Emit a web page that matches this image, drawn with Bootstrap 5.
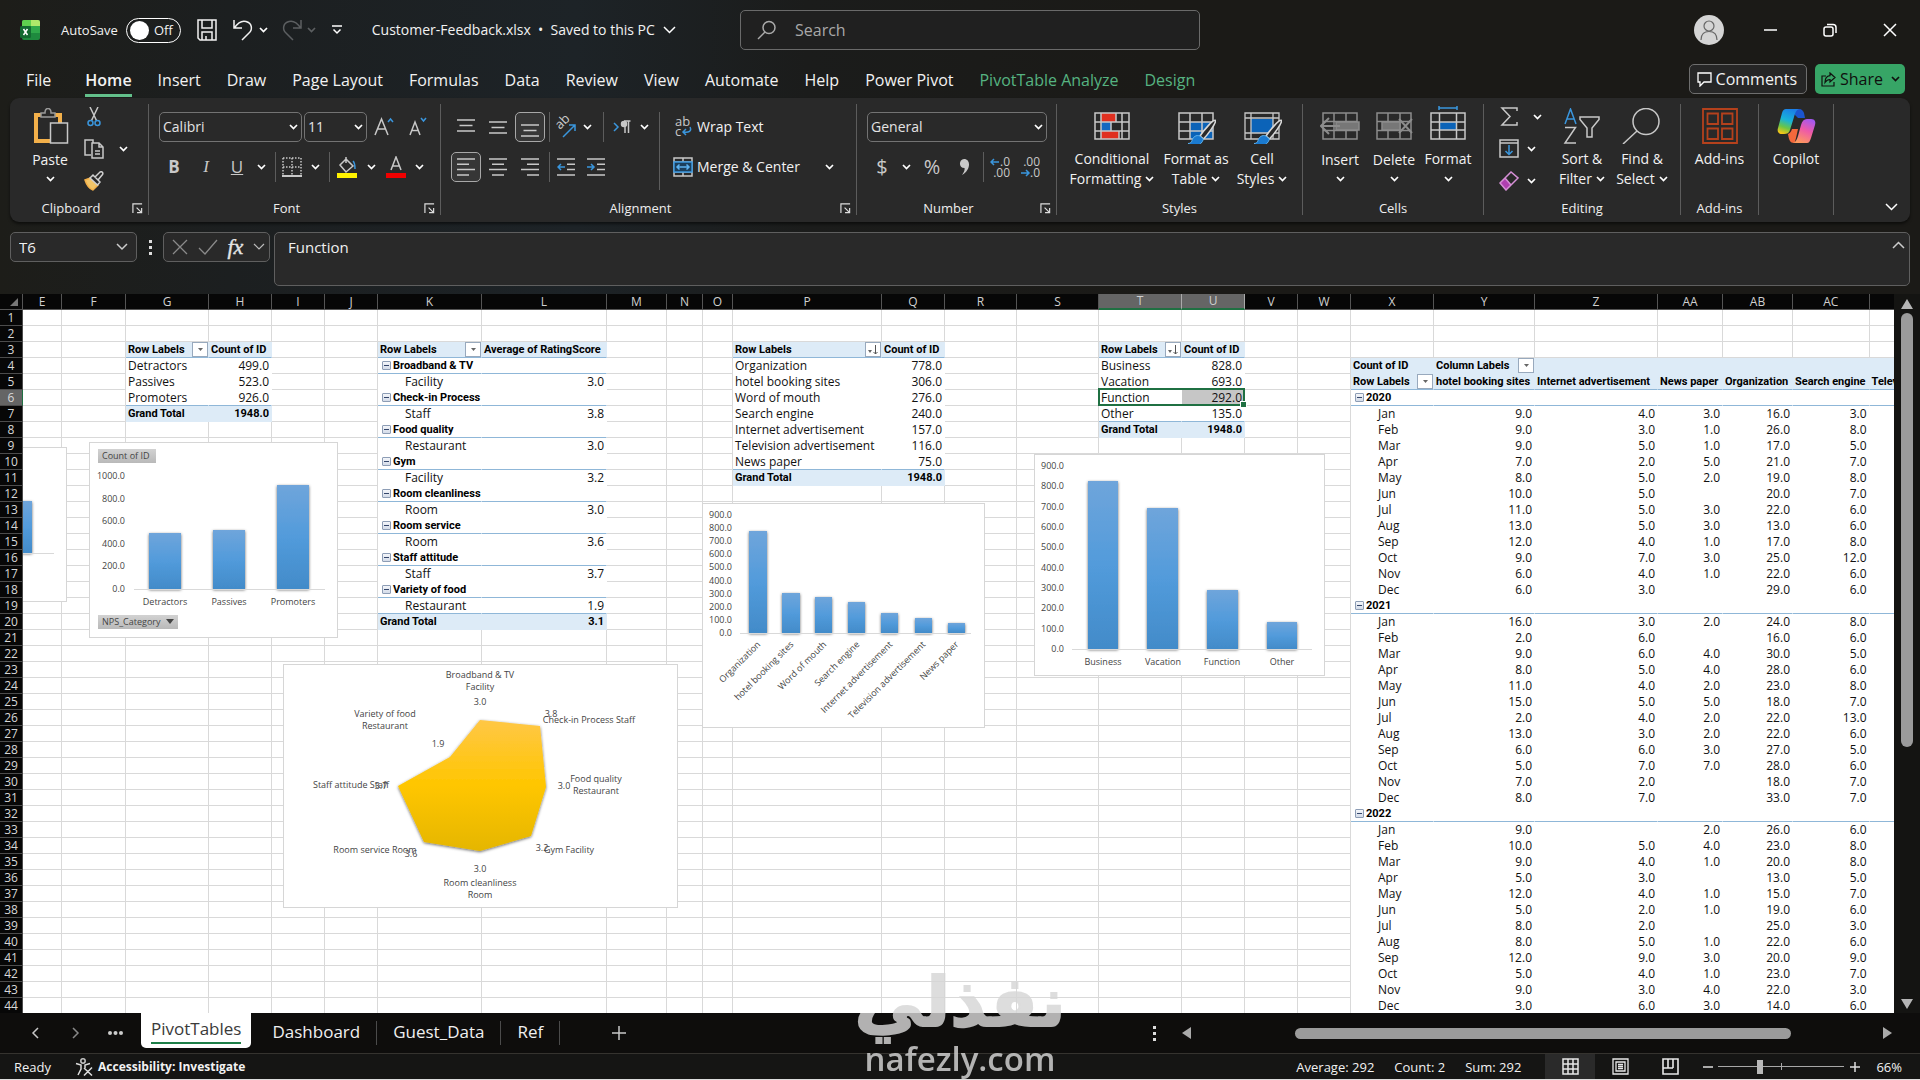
<!DOCTYPE html>
<html lang="en">
<head>
<meta charset="utf-8">
<meta name="viewport" content="width=device-width, initial-scale=1">
<title>Customer-Feedback.xlsx</title>
<link href="https://cdn.jsdelivr.net/npm/bootstrap@5.3.0/dist/css/bootstrap.min.css" rel="stylesheet">
<style>
:root{--ink:#f2f2f2;--line:#5c5c5c;--panel:#292929;--grid:#d9d9d9;--accent:#1f7042;--ui:"Open Sans","Noto Sans",sans-serif}
body{height:100vh;overflow:hidden;color:var(--ink);font:14px/20px var(--ui);background:linear-gradient(90deg,#1d1d19 0,#1c1f20 12%,#1d2327 30%,#1b1c1b 42%,#1b1a17 60%,#1b1a17 100%)}
button{background:none;border:0;padding:0;color:inherit;line-height:inherit}
svg{display:block;flex:none;fill:none;stroke:#c8c8c8;stroke-width:1.5}
.chv{width:9px;height:6px;stroke:#fff;stroke-width:1.7}
.chv.dim{stroke:#5c5f61}.chv.ink{stroke:#10100e}
.ic{display:flex;align-items:center;justify-content:center;flex:none;height:30px}
.ic svg text{font-family:"Open Sans","Noto Sans",sans-serif;fill:#c8c8c8;stroke:none}
/* title bar */
.titlebar{height:60px}
.title-left{width:740px;padding-left:20px}
.auto{font-size:13px;margin-left:21px}
.toggle{width:55px;height:25px;border:1px solid #fff;border-radius:13px;padding:0 7px 0 3px;margin:0 16px 0 8px;font-size:13px}
.toggle input{appearance:none;width:19px;height:19px;border-radius:50%;background:#fff;margin:0}
.redo{margin-left:7px}
.search{width:460px;height:40px;border:1px solid #6a6a6a;border-radius:5px;background:#202020;padding:0 16px}
.search input{background:none;border:0;outline:0;color:#b5b5b5;font-size:16px}
.search input::placeholder{color:#a8a8a8;opacity:1}
.winbtn{width:60px;height:40px}
/* ribbon tabs */
.tabs{height:38px;padding:0 15px 0 26px;font-size:16px;line-height:24px}
.tabs nav{gap:26px;padding-top:8px}
.tabs nav a{color:var(--ink);text-decoration:none;white-space:nowrap}
.tabs nav a.on{font-weight:600;border-bottom:3px solid #63c08b;height:29px;line-height:24px;padding-bottom:2px}
.tabs nav a.ctx{color:#56b381}
.cmt{border:1px solid #6e6e6e;border-radius:5px;background:#262626;height:30px;padding:0 9px 0 7px}
.share{border-radius:5px;background:#37a566;color:#10100e;height:30px;padding:0 5px 0 6px}
/* ribbon */
.ribbon{margin:0 10px;background:var(--panel);border-radius:9px;padding:6px 8px 7px 0;height:124px;box-shadow:0 2px 3px #0008}
.rg{border-right:1px solid var(--line);display:flex;flex-direction:column;flex:none}
.rg .body{height:98px;display:flex}
.rg .cap{display:flex;align-items:center;font-size:13px;line-height:14px;color:#eee}
.rg .cap span{flex:1;text-align:center}
.g-clip{width:139px}.g-font{width:292px}.g-align{width:416px}.g-num{width:200px}.g-styles{width:246px}.g-cells{width:181px}.g-edit{width:197px}.g-add{width:78px}.g-cop{width:75px}
.pl10{padding-left:10px}
.rows{display:flex;flex-direction:column;gap:10px;padding-top:8px}
.rows>div{display:flex;height:30px;align-items:center}
.minis{display:flex;flex-direction:column;gap:6px}
.minis>div{display:flex;height:26px}.minis .ic{height:26px}
.s10{width:10px}.s16{width:16px}.s18{width:18px}.s20{width:20px}.s22{width:22px}.s26{width:26px}.s28{width:28px}.s30{width:30px}.s34{width:34px}
.sep{flex:none;width:8px;height:30px;background:linear-gradient(var(--line),var(--line)) center/1px 100% no-repeat}
.tall{height:78px;margin-top:8px;margin-right:6px}
.sel{border:1px solid #a8a8a8;border-radius:5px;background:#363636}
.merge-opt{margin-left:20px}
.big{display:flex;flex-direction:column;align-items:center;padding-top:4px;flex:none;line-height:20px;white-space:nowrap}
.big>svg{margin-bottom:5px;height:36px;width:40px}
.big .low{padding-top:2px}
.big .ln{display:flex;align-items:center;justify-content:center;gap:4px;height:20px}
.w54{width:54px}.w60{width:60px}.w78{width:78px}.w90{width:90px}
.pick{appearance:none;height:30px;border:1px solid #737373;border-radius:5px;color:#e4e4e4;padding:0 3px;font-size:14px;background:#292929 url("data:image/svg+xml,%3Csvg xmlns='http://www.w3.org/2000/svg' viewBox='0 0 9 6'%3E%3Cpath d='M1 1l3.500 3.500L8 1' fill='none' stroke='%23fff' stroke-width='1.700'/%3E%3C/svg%3E") right 3px center/9px 6px no-repeat}
.p-name{width:143px;margin-right:2px}.p-size{width:63px}.p-num{width:180px}
.glyph{color:#c8c8c8;font-size:17px}
.serif{font-family:"Liberation Serif",serif}
/* formula bar */
.fbar{padding:10px 10px 8px;height:72px}
.fbox{border:1px solid #5f5f5f;border-radius:5px;background:var(--panel)}
.fbox input,.fbox textarea{background:none;border:0;outline:0;color:#f0f0f0;font-size:15px;resize:none;padding:0}
.namebox{width:127px;height:30px}.fxbox{width:107px;height:30px}.formula{padding:4px 4px 0 13px}
.fxb{font:italic 22px/24px "Liberation Serif",serif;color:#e4e4e4;-webkit-text-stroke:.4px #e4e4e4}
/* sheet */
.work{min-height:0}
.sheet{position:relative;overflow:hidden;background:#fff;flex:1;min-width:0}
.grid{table-layout:fixed;border-collapse:separate;border-spacing:0;width:max-content;color:#111;font:12px/15px "Open Sans","Noto Sans",sans-serif}
.grid th,.grid td{height:16px;padding:0 3px 0 2px;border-right:1px solid var(--grid);border-bottom:1px solid var(--grid);white-space:nowrap;overflow:hidden;background:#fff}
.grid thead th{background:#070707;color:#d0d0d0;font-weight:400;text-align:center;border-color:#555;padding:0;line-height:14px}
.grid tbody th{background:#070707;color:#d8d8d8;font-weight:400;text-align:center;border-color:#4c4c4c;padding:0}
.grid thead th.cur{background:#656565;border-right-color:#aaa;border-bottom:2px solid var(--accent)}
.grid tbody th.cur{background:#656565;border-right:1px solid var(--accent)}
.grid td.pv{border-color:#fff;overflow:visible}
.grid td.hd,.grid td.gt{background:#ddebf7;border-color:#ddebf7}
.grid .bd{font:700 11px/15px Roboto,"Open Sans",sans-serif;color:#000}
.grid td.bb{border-bottom-color:#8fb7d8}
.grid td.num{text-align:right;padding-right:2px}
.grid td.in{padding-left:27px}
.grid td.shade{background:#c6c6c6;border-color:#c6c6c6}
.fil{float:right;width:16px;height:15px;margin-right:-3px;background:#fff;border:1px solid #98a9bd;display:flex;align-items:center;justify-content:center}
.fil svg{stroke:#555;fill:#666;stroke-width:1}
.colp{float:left;width:9px;height:9px;margin:3px 2px 0 2px;border:1px solid #8d9db5;background:linear-gradient(#f4f6fa,#d3dbe8);border-radius:1px;display:flex;align-items:center;justify-content:center}
.colp i{width:5px;height:1px;background:#34466b}
.pick-range{position:absolute;left:1098px;top:94px;width:147px;height:18px;border:2px solid var(--accent)}
.pick-range i{position:absolute;right:-3px;bottom:-3px;width:5px;height:5px;background:var(--accent);outline:1px solid #fff}
.chart{position:absolute;background:#fff;border:1px solid #d6d6d6}
.chart svg{position:absolute;left:-1px;top:-1px;stroke:none}
.chart text{font:9px "Open Sans","Noto Sans",sans-serif;fill:#444}
.c-part{left:23px;top:153px;width:44px;height:155px;border-left:0}
.c-part svg{left:0}
.c-nps{left:89px;top:148px;width:249px;height:196px}
.c-rating{left:283px;top:370px;width:395px;height:244px}
.c-source{left:702px;top:209px;width:283px;height:225px}
.c-purpose{left:1034px;top:160px;width:291px;height:222px}
.vsb{width:26px;background:#141412;padding:5px 0 4px}
.vsb .bar{width:12px;background:#9b9b9b;border-radius:6px;height:434px}
/* bottom */
.sheets{height:41px;background:#0e0d0c;border-bottom:1px solid #35332f;font-size:17px;color:#f0f0f0}
.sheets a{color:inherit;text-decoration:none;border-right:1px solid #4b4b4b;padding:0 16px;height:24px;line-height:22px}
.sheets a.on{background:#fff;color:#3a3a3a;border:0;border-radius:0 0 5px 5px;height:35px;padding:4px 10px 0;align-self:flex-start;margin-right:5px}
.sheets a.on span{display:block;border-bottom:2px solid #1e7f48;height:27px;line-height:24px}
.sh-nav{width:141px;padding-left:31px}.sh-next{margin-left:33px}.sh-more{margin-left:28px}
.hscroll{padding-right:28px}.grip{margin-right:26px}
.hbar{width:496px;height:11px;background:#9b9b9b;border-radius:6px;margin:0 92px 0 104px}
.status{height:26px;background:#151514;font-size:13px;border-bottom:1px solid #ddd;padding:0 18px 0 14px}
.acc{margin-left:24px;font-weight:700;font-size:12px}
.stats{gap:20px;margin-right:24px}
.view{width:50px;height:25px;display:flex;align-items:center;justify-content:center}
.view.on{background:#2a2a2a}
.zoomr{appearance:none;width:126px;height:14px;margin:0 6px 0 5px;background:linear-gradient(#a8a8a8,#a8a8a8) center/1px 7px no-repeat,linear-gradient(#a8a8a8,#a8a8a8) center/100% 1px no-repeat}
.zoomr::-webkit-slider-thumb{appearance:none;width:6px;height:14px;background:#b8b8b8}
.watermark{position:absolute;left:854px;top:962px;width:212px;color:#d6d6d6;opacity:.82;pointer-events:none;text-align:center;white-space:nowrap}
.watermark .ar{font:700 69px/80px "DejaVu Sans",sans-serif;height:77px;-webkit-text-stroke:2px #d6d6d6}
.watermark .en{font:600 33px/40px "Open Sans",sans-serif}
</style>
</head>
<body class="d-flex flex-column">
<svg width="0" height="0" class="position-absolute">
<symbol id="c" viewBox="0 0 9 6"><path d="M1 1l3.500 3.500L8 1"/></symbol>
<symbol id="launch" viewBox="0 0 12 12"><path d="M1 11V1h10M5 5l5 5M10.500 5.500v5h-5" stroke="#ddd" stroke-width="1.300"/></symbol>
<symbol id="tbl" viewBox="0 0 36 28"><path d="M1 1h34v26H1zM1 9.500h34M1 18.500h34M12 1v26M24 1v26"/></symbol>
<symbol id="brush" viewBox="0 0 30 28"><path d="M28.500 1.500c-2-1.500-12 10-15.500 15.500l3.500 3C20 16.500 29.500 4 28.500 1.500z" fill="#292929" stroke="#d8d8d8" stroke-width="1.600"/><path d="M13 17c-4-1.500-7 1-8 4.500-.5 2-2 3-4 3 5 3.500 13 3.500 15.500-4.500z" fill="#1a7ad0" stroke="#5fb0ea" stroke-width="1"/></symbol>
</svg>

<header class="titlebar d-flex align-items-center flex-shrink-0">
  <div class="title-left d-flex align-items-center">
    <svg width="20" height="22" viewBox="0 0 20 22"><g stroke="none"><rect x="2" y="1" width="18" height="20" rx="2" fill="#1e8a3e"/><path d="M2 3a2 2 0 0 1 2-2h7v6H2z" fill="#5fd04f"/><path d="M11 1h7a2 2 0 0 1 2 2v4h-9z" fill="#aee86a"/><path d="M11 7h9v7h-9z" fill="#2fa84a"/><rect y="7" width="11" height="12" rx="1.500" fill="#136a31"/></g><path d="M3.500 10l4 6M7.500 10l-4 6" stroke="#fff"/></svg>
    <label for="autosave" class="auto">AutoSave</label>
    <span class="toggle d-flex align-items-center justify-content-between"><input type="checkbox" id="autosave"><span>Off</span></span>
    <button aria-label="Save"><svg width="20" height="22" viewBox="0 0 20 22"><path d="M1 1h18v20H3l-2-2zM5 1v8h10V1M5 21v-8h10v8M9 17v4" stroke="#f2f2f2"/></svg></button>
    <button aria-label="Undo" class="ms-3"><svg width="20" height="22" viewBox="0 0 20 22"><path d="M1 1v8h8M1.500 9C5 3.500 9 1.500 13 2.500c6 1.500 7 8 3 11.500L9 21" stroke="#f2f2f2"/></svg></button>
    <button aria-label="Undo list" class="s22 ic"><svg class="chv"><use href="#c"/></svg></button>
    <button aria-label="Redo" class="redo"><svg width="20" height="22" viewBox="0 0 20 22"><path d="M19 1v8h-8M18.500 9C15 3.500 11 1.500 7 2.500 1 4 0 10.500 4 14l7 7" stroke="#5c5f61"/></svg></button>
    <button aria-label="Redo list" class="s20 ic"><svg class="chv dim"><use href="#c"/></svg></button>
    <button aria-label="Customize toolbar" class="s30 ic"><svg width="10" height="10" viewBox="0 0 10 10"><path d="M0 1h10M1.500 4.500L5 8l3.500-3.500" stroke="#fff"/></svg></button>
    <button class="ms-3 ps-1 d-flex align-items-center gap-2 text-nowrap">Customer-Feedback.xlsx &nbsp;•&nbsp; Saved to this PC <svg width="13" height="8" viewBox="0 0 13 8"><path d="M1 1l5.500 5.500L12 1" stroke="#fff"/></svg></button>
  </div>
  <div class="search d-flex align-items-center gap-3">
    <svg width="20" height="20" viewBox="0 0 20 20"><circle cx="12" cy="7.500" r="6" stroke="#aaa"/><path d="M8 12l-7 7" stroke="#aaa"/></svg>
    <input type="search" placeholder="Search" aria-label="Search" class="flex-fill">
  </div>
  <div class="ms-auto d-flex align-items-center">
    <button aria-label="Account" class="me-3"><svg width="30" height="30" viewBox="0 0 30 30"><circle cx="15" cy="15" r="15" fill="#d4d4d4" stroke="none"/><circle cx="15" cy="11" r="5" stroke="#666" stroke-width="1.200"/><path d="M7 25c0-6 3.500-8.500 8-8.500s8 2.500 8 8.500" stroke="#666" stroke-width="1.200"/></svg></button>
    <button aria-label="Minimize" class="winbtn ic"><svg width="13" height="2"><path d="M0 1h13" stroke="#fff"/></svg></button>
    <button aria-label="Restore" class="winbtn ic"><svg width="14" height="14" viewBox="0 0 14 14"><rect x="1" y="4" width="9" height="9" rx="2" stroke="#fff"/><path d="M4 1.500h6a3 3 0 0 1 3 3V10" stroke="#fff"/></svg></button>
    <button aria-label="Close" class="winbtn ic"><svg width="14" height="14" viewBox="0 0 14 14"><path d="M1 1l12 12M13 1L1 13" stroke="#fff"/></svg></button>
  </div>
</header>

<div class="tabs d-flex flex-shrink-0">
  <nav class="d-flex">
    <a href="#">File</a><a href="#" class="on ms-2">Home</a><a href="#">Insert</a><a href="#">Draw</a><a href="#">Page Layout</a><a href="#">Formulas</a><a href="#">Data</a><a href="#">Review</a><a href="#">View</a><a href="#">Automate</a><a href="#">Help</a><a href="#">Power Pivot</a><a href="#" class="ctx">PivotTable Analyze</a><a href="#" class="ctx">Design</a>
  </nav>
  <div class="ms-auto d-flex pt-1 gap-2">
    <button class="cmt d-flex align-items-center gap-1"><svg width="15" height="15" viewBox="0 0 15 15"><path d="M1 1h13v9H7l-4 4v-4H1z" stroke="#fff" stroke-width="1.300"/></svg>Comments</button>
    <button class="share d-flex align-items-center gap-1"><svg width="15" height="15" viewBox="0 0 15 15"><path d="M5 4H1v10h12v-4M9 1l5 4.500L9 10V7.500C6 7.500 5 9 4 10.500 4 6.500 6 4 9 3.700z" stroke="#10100e" stroke-width="1.200"/></svg>Share<svg class="chv ink ms-1"><use href="#c"/></svg></button>
  </div>
</div>

<section class="ribbon d-flex flex-shrink-0">
  <div class="rg g-clip">
    <div class="body pl10">
      <button class="big w60"><svg viewBox="0 0 40 36"><path d="M4 5h28v30H4z" fill="#f3b04a" stroke="none"/><path d="M8 9h20v22H8z" fill="#292929" stroke="none"/><path d="M11 9V5h4c0-6 6-6 6 0h4v4z" fill="#292929" stroke="#9a9a9a"/><rect x="20.500" y="15" width="17" height="20" fill="#292929" stroke="#c8c8c8"/></svg><span class="ln low">Paste</span><span class="ln"><svg class="chv"><use href="#c"/></svg></span></button>
      <div class="minis">
        <div><button aria-label="Cut" class="ic s28"><svg width="14" height="20" viewBox="0 0 14 20"><path d="M3 0l6.500 13.500M11 0L4.500 13.500"/><circle cx="3.500" cy="16" r="2.500" stroke="#3a96dd"/><circle cx="10.500" cy="16" r="2.500" stroke="#3a96dd"/></svg></button></div>
        <div><button aria-label="Copy" class="ic s28"><svg width="20" height="20" viewBox="0 0 20 20"><path d="M7 16H1V1h8v3M8 4h7l4 4v11H8zM15 4v4h4M11 12h5M11 15h5"/></svg></button><button aria-label="Copy options" class="ic s30"><svg class="chv"><use href="#c"/></svg></button></div>
        <div><button aria-label="Format Painter" class="ic s28"><svg width="20" height="20" viewBox="0 0 20 20"><path d="M1 9l5-2 8 7-5 5c-3-1-6-4-8-10z" fill="#f3c567" stroke="#f3b04a"/><path d="M6 7l3-3 7 7-2.500 3zM11 6l5-5c2-1 3.500 1 2.500 2.500L14 9" fill="#292929" stroke="#d0d0d0"/></svg></button></div>
      </div>
    </div>
    <div class="cap"><span>Clipboard</span><button aria-label="Clipboard settings" class="s16"><svg width="11" height="11"><use href="#launch"/></svg></button></div>
  </div>

  <div class="rg g-font">
    <div class="body"><div class="rows pl10">
      <div><select class="pick p-name" aria-label="Font"><option>Calibri</option></select><select class="pick p-size" aria-label="Font size"><option>11</option></select>
        <button aria-label="Increase font" class="ic s34"><svg width="20" height="20" viewBox="0 0 20 20"><path d="M1 18L7.500 2 14 18M3.500 12h8"/><path d="M14 5l2.500-3L19 5" stroke="#3a96dd"/></svg></button>
        <button aria-label="Decrease font" class="ic s34"><svg width="20" height="20" viewBox="0 0 20 20"><path d="M2 18L7 5l5 13M4 13.500h6.500"/><path d="M13 1l2.500 3L18 1" stroke="#3a96dd"/></svg></button></div>
      <div><button class="ic s30 glyph fw-bold">B</button><button class="ic s34 glyph fst-italic serif">I</button><button class="ic s28 glyph text-decoration-underline">U</button><button aria-label="Underline options" class="ic s20"><svg class="chv"><use href="#c"/></svg></button><i class="sep"></i>
        <button aria-label="Borders" class="ic s26"><svg width="20" height="20" viewBox="0 0 20 20"><path d="M1 1h18M1 10h18M1 1v18M10 1v18M19 1v18" stroke-dasharray="1.500 1.500"/><path d="M0 19h20" stroke-width="2"/></svg></button><button aria-label="Border options" class="ic s20"><svg class="chv"><use href="#c"/></svg></button><i class="sep"></i>
        <button aria-label="Fill colour" class="ic s28"><svg width="20" height="22" viewBox="0 0 20 22"><path d="M9 1v6M3 9l6-6 7 7-7 6z"/><path d="M16 5c2 2 2 5 2 8" stroke="#3a96dd"/><path d="M0 17h20v5H0z" fill="#fff200" stroke="none"/></svg></button><button aria-label="Fill options" class="ic s20"><svg class="chv"><use href="#c"/></svg></button>
        <button aria-label="Font colour" class="ic s30"><svg width="20" height="22" viewBox="0 0 20 22"><path d="M5 14L10 1l5 13M6.500 10h7"/><path d="M0 17h20v5H0z" fill="#f00000" stroke="none"/></svg></button><button aria-label="Font colour options" class="ic s16"><svg class="chv"><use href="#c"/></svg></button></div>
    </div></div>
    <div class="cap"><span>Font</span><button aria-label="Font settings" class="s16"><svg width="11" height="11"><use href="#launch"/></svg></button></div>
  </div>

  <div class="rg g-align">
    <div class="body"><div class="rows pl10">
      <div><button aria-label="Top" class="ic s30"><svg width="18" height="22" viewBox="0 0 18 22"><path d="M0 4h18M2.500 9.500h13M0 15h18"/></svg></button><button aria-label="Middle" class="ic s34"><svg width="18" height="22" viewBox="0 0 18 22"><path d="M0 6h18M2.500 11.500h13M0 17h18"/></svg></button><button aria-label="Bottom" class="ic s30 sel"><svg width="18" height="22" viewBox="0 0 18 22"><path d="M0 9h18M2.500 14.500h13M0 20h18"/></svg></button><i class="sep"></i>
        <button aria-label="Orientation" class="ic s26"><svg width="22" height="22" viewBox="0 0 22 22"><text x="0" y="0" font-size="13" transform="translate(5 14) rotate(-45)">ab</text><path d="M8 21L20 9M14 9h6v6" stroke="#3a96dd"/></svg></button><button aria-label="Orientation options" class="ic s16"><svg class="chv"><use href="#c"/></svg></button><i class="sep mx-1"></i><button aria-label="Direction" class="ic s22"><svg width="18" height="14" viewBox="0 0 18 14"><path d="M1 3l4 4-4 4" stroke="#3a96dd"/><path d="M12 13V1M15.500 13V1M17.500 1H11"/><circle cx="11" cy="4" r="2.500" fill="#c8c8c8"/></svg></button><button aria-label="Direction options" class="ic s22"><svg class="chv"><use href="#c"/></svg></button></div>
      <div><button aria-label="Left" class="ic s30 sel"><svg width="18" height="20" viewBox="0 0 18 20"><path d="M0 2h18M0 7.300h12M0 12.600h18M0 18h12"/></svg></button><button aria-label="Centre" class="ic s34"><svg width="18" height="20" viewBox="0 0 18 20"><path d="M0 2h18M3 7.300h12M0 12.600h18M3 18h12"/></svg></button><button aria-label="Right" class="ic s30"><svg width="18" height="20" viewBox="0 0 18 20"><path d="M0 2h18M6 7.300h12M0 12.600h18M6 18h12"/></svg></button><i class="sep"></i>
        <button aria-label="Decrease indent" class="ic s26"><svg width="18" height="20" viewBox="0 0 18 20"><path d="M0 2h18M10 7.300h8M10 12.600h8M0 18h18"/><path d="M8 10H1M4 7l-3 3 3 3" stroke="#3a96dd"/></svg></button><button aria-label="Increase indent" class="ic s34"><svg width="18" height="20" viewBox="0 0 18 20"><path d="M0 2h18M10 7.300h8M10 12.600h8M0 18h18"/><path d="M0 10h7M4 7l3 3-3 3" stroke="#3a96dd"/></svg></button></div>
    </div>
    <i class="sep tall"></i>
    <div class="rows">
      <div><button class="ic"><span class="ic s28"><svg width="18" height="22" viewBox="0 0 18 22"><text x="1" y="10" font-size="13">ab</text><text x="1" y="20" font-size="13">c</text><path d="M16 11c2 4-1 6-7 5M12 13l-3 3 3 3" stroke="#3a96dd"/></svg></span>Wrap Text</button></div>
      <div><button class="ic"><span class="ic s28"><svg width="20" height="20" viewBox="0 0 20 20"><path d="M1 1h18v18H1zM1 5h18M1 15h18M10 1v4M10 15v4"/><path d="M1 5h18v10H1z" fill="#1c3f5c" stroke="#3a96dd"/><path d="M4 10h12M6.500 7.500L4 10l2.500 2.500M13.500 7.500L16 10l-2.500 2.500" stroke="#5db2f0"/></svg></span>Merge &amp; Center</button><button aria-label="Merge options" class="ic s20 merge-opt"><svg class="chv"><use href="#c"/></svg></button></div>
    </div></div>
    <div class="cap"><span>Alignment</span><button aria-label="Alignment settings" class="s16"><svg width="11" height="11"><use href="#launch"/></svg></button></div>
  </div>

  <div class="rg g-num">
    <div class="body"><div class="rows pl10">
      <div><select class="pick p-num" aria-label="Number format"><option>General</option></select></div>
      <div><button class="ic s30 glyph fs-5">$</button><button aria-label="Currency options" class="ic s18"><svg class="chv"><use href="#c"/></svg></button><button class="ic s34 glyph fs-5">%</button><button aria-label="Comma style" class="ic s30"><svg width="11" height="18" viewBox="0 0 11 18"><path d="M5 1c7 0 7 11-2 16 2-3 3-5 2.500-7C-1 10 0 1 5 1z" fill="#c8c8c8" stroke="none"/></svg></button><i class="sep"></i>
      <button aria-label="Increase decimal" class="ic s26"><svg width="20" height="22" viewBox="0 0 20 22"><path d="M9 6H1M4 3L1 6l3 3" stroke="#3a96dd"/><text x="20" y="10" font-size="12" text-anchor="end">.0</text><text x="20" y="21" font-size="12" text-anchor="end">.00</text></svg></button>
      <button aria-label="Decrease decimal" class="ic s34"><svg width="20" height="22" viewBox="0 0 20 22"><path d="M1 17h8M6 14l3 3-3 3" stroke="#3a96dd"/><text x="20" y="10" font-size="12" text-anchor="end">.00</text><text x="20" y="21" font-size="12" text-anchor="end">.0</text></svg></button></div>
    </div></div>
    <div class="cap"><span>Number</span><button aria-label="Number settings" class="s16"><svg width="11" height="11"><use href="#launch"/></svg></button></div>
  </div>

  <div class="rg g-styles">
    <div class="body pl10">
      <button class="big w90"><svg viewBox="-2 -4 40 36"><path d="M7 1h15v9H7zM7 19h18v8H7z" fill="#e03020" stroke="none"/><path d="M7 10h10v9H7z" fill="#1668c0" stroke="none"/><path d="M1 1h34v26H1zM1 10h34M1 19h34M7 1v26M28 1v26M22 1v9M17 10v9M25 19v8"/></svg><span class="ln">Conditional</span><span class="ln">Formatting <svg class="chv"><use href="#c"/></svg></span></button>
      <button class="big w78"><svg viewBox="-2 -4 40 36"><path d="M12 10h23v17H12z" fill="#0b63b8" stroke="none"/><path d="M1 1h34v26H1zM1 10h34M1 19h34M12 1v26M24 1v26"/><use href="#brush" x="9" y="7" width="30" height="28"/></svg><span class="ln">Format as</span><span class="ln">Table <svg class="chv"><use href="#c"/></svg></span></button>
      <button class="big w54"><svg viewBox="-2 -4 40 36"><path d="M7 7h22v14H7z" fill="#0b63b8" stroke="none"/><path d="M1 1h34v26H1zM1 6h34M1 21h34M7 1v26M29 1v26" stroke-width="1.300"/><use href="#brush" x="9" y="7" width="30" height="28"/></svg><span class="ln">Cell</span><span class="ln">Styles <svg class="chv"><use href="#c"/></svg></span></button>
    </div>
    <div class="cap"><span>Styles</span></div>
  </div>

  <div class="rg g-cells">
    <div class="body pl10">
      <button class="big w54"><svg viewBox="-2 -4 40 36"><g stroke="#8c8c8c"><use href="#tbl" width="36" height="28"/><path d="M14 10h23v8H14z" fill="#777"/><path d="M18 14H0M7 6l-8 8 8 8" stroke-width="2"/></g></svg><span class="ln low">Insert</span><span class="ln"><svg class="chv"><use href="#c"/></svg></span></button>
      <button class="big w54"><svg viewBox="-2 -4 40 36"><g stroke="#8c8c8c"><use href="#tbl" width="36" height="28"/><path d="M6 10h18v8H6z" fill="#777"/><path d="M23 7l13 14M36 7L23 21" stroke-width="2"/></g></svg><span class="ln low">Delete</span><span class="ln"><svg class="chv"><use href="#c"/></svg></span></button>
      <button class="big w54"><svg viewBox="-2 -4 40 36" overflow="visible"><path d="M9.500 10h17v8h-17z" fill="#0b63b8" stroke="none"/><path d="M1 1h34v26H1zM1 10h34M1 18h34M9.500 1v26M26.500 1v26"/><path d="M9-4h18M9-6v4M27-6v4" stroke="#3a96dd"/></svg><span class="ln">Format</span><span class="ln"><svg class="chv"><use href="#c"/></svg></span></button>
    </div>
    <div class="cap"><span>Cells</span></div>
  </div>

  <div class="rg g-edit">
    <div class="body ps-2">
      <div class="minis w60">
        <div><button aria-label="AutoSum" class="ic s34"><svg width="18" height="20" viewBox="0 0 18 20"><path d="M17 4V1H2l8 8.500L2 18h15v-3"/></svg></button><button aria-label="Sum options" class="ic s22"><svg class="chv"><use href="#c"/></svg></button></div>
        <div><button aria-label="Fill" class="ic s34"><svg width="20" height="20" viewBox="0 0 20 20"><path d="M1 1h18v17H1zM1 4h18"/><path d="M10 6v9M6.500 12l3.500 3.500 3.500-3.500" stroke="#3a96dd"/></svg></button><button aria-label="Fill options" class="ic s10"><svg class="chv"><use href="#c"/></svg></button></div>
        <div><button aria-label="Clear" class="ic s34"><svg width="20" height="20" viewBox="0 0 20 20"><path d="M1 12l5-5 6 7-5 5z" fill="#b03fb0" stroke="none"/><path d="M1 12L12 1l7 6L7 19zM6 7l6 7" stroke="#d68fd6"/></svg></button><button aria-label="Clear options" class="ic s10"><svg class="chv"><use href="#c"/></svg></button></div>
      </div>
      <button class="big w60"><svg viewBox="0 0 40 36"><path d="M3 16L8.500 1 14 16M5 11h7.500" stroke="#3a96dd"/><path d="M3 19.500h10.500L3 35h11M18 9h19v2.500l-7 8.500v9h-5v-9l-7-8.500z"/></svg><span class="ln">Sort &amp;</span><span class="ln">Filter <svg class="chv"><use href="#c"/></svg></span></button>
      <button class="big w60"><svg viewBox="0 0 40 36"><circle cx="24" cy="13.500" r="13"/><path d="M15 23L1 36"/></svg><span class="ln">Find &amp;</span><span class="ln">Select <svg class="chv"><use href="#c"/></svg></span></button>
    </div>
    <div class="cap"><span>Editing</span></div>
  </div>

  <div class="rg g-add">
    <div class="body justify-content-center"><button class="big"><svg viewBox="0 0 40 36"><path d="M3 1h34v34H3zM7.500 5.500h10.500v10.500H7.500zM22 5.500h10.500v10.500H22zM7.500 20.500h10.500V31H7.500zM22 20.500h10.500V31H22z" stroke="#b5411c" stroke-width="1.800"/></svg><span class="ln">Add-ins</span></button></div>
    <div class="cap"><span>Add-ins</span></div>
  </div>
  <div class="rg g-cop">
    <div class="body justify-content-center"><button class="big"><svg viewBox="0 0 40 36">
      <defs><linearGradient id="g1" x1=".6" y1="0" x2=".3" y2="1"><stop offset="0" stop-color="#1b7fe8"/><stop offset=".45" stop-color="#18b3d8"/><stop offset=".75" stop-color="#6cc644"/><stop offset="1" stop-color="#f5c518"/></linearGradient><linearGradient id="g2" x1=".7" y1="0" x2=".3" y2="1"><stop offset="0" stop-color="#a458f0"/><stop offset=".45" stop-color="#ee5aa8"/><stop offset="1" stop-color="#ff9a5c"/></linearGradient></defs>
      <g stroke="none"><path d="M20 1h3c3 0 4 2 5 4l1 5h-7l-4-4c0-3 0-4 2-5z" fill="#1b55d0"/><path d="M10 1h13c-3 1-4 4-5 8l-4 13c-1 3-3 4-6 4H6c-4 0-5-3-4-6L6 5c1-3 2-4 4-4z" fill="url(#g1)"/><path d="M18 35c-4 0-5-3-6-9 2-1 3-2 4-5h6l-2 9c-1 3-1 5-2 5z" fill="#f4683c"/><path d="M31 35H17c3-1 4-4 5-7l3-11c1-4 3-6 6-6h4c4 0 5 3 4 6l-4 13c-1 3-2 5-4 5z" fill="url(#g2)"/></g></svg><span class="ln">Copilot</span></button></div>
  </div>
  <div class="ms-auto align-self-end"><button aria-label="Collapse ribbon" class="d-block p-1"><svg width="13" height="8" viewBox="0 0 13 8"><path d="M1 1l5.500 5.500L12 1" stroke="#fff"/></svg></button></div>
</section>

<div class="fbar d-flex flex-shrink-0">
  <div class="fbox namebox d-flex align-items-center px-2"><input aria-label="Name box" value="T6" class="flex-fill w-50"><svg width="12" height="8" viewBox="0 0 12 8"><path d="M1 1l5 5 5-5" stroke="#ccc"/></svg></div>
  <div class="ic s26"><svg width="3" height="16"><path d="M1.500 1v15" stroke="#ddd" stroke-width="3" stroke-dasharray="3 3"/></svg></div>
  <div class="fbox fxbox d-flex align-items-center justify-content-between ps-2 pe-1">
    <button aria-label="Cancel"><svg width="16" height="16" viewBox="0 0 16 16"><path d="M1 1l14 14M15 1L1 15" stroke="#8a8a8a" stroke-width="1.300"/></svg></button>
    <button aria-label="Enter"><svg width="20" height="16" viewBox="0 0 20 16"><path d="M1 9l6 6L19 1" stroke="#8a8a8a" stroke-width="1.300"/></svg></button>
    <button class="fxb">fx</button><svg width="12" height="8" viewBox="0 0 12 8"><path d="M1 1l5 5 5-5" stroke="#bbb" stroke-width="1.200"/></svg>
  </div>
  <div class="fbox formula d-flex flex-fill ms-1"><textarea aria-label="Formula bar" class="flex-fill h-100">Function</textarea><button aria-label="Collapse formula bar" class="align-self-start pt-1"><svg width="13" height="8" viewBox="0 0 13 8"><path d="M1 7l5.500-5.500L12 7" stroke="#ccc"/></svg></button></div>
</div>

<main class="work d-flex flex-fill overflow-hidden">
  <div class="sheet">
    <table class="grid"><colgroup id="cols"></colgroup><thead><tr id="head"></tr></thead><tbody id="rows"></tbody></table>
    <div class="pick-range"><i></i></div>
    <div class="chart c-part"></div><div class="chart c-nps"></div><div class="chart c-rating"></div><div class="chart c-source"></div><div class="chart c-purpose"></div>
  </div>
  <div class="vsb d-flex flex-column align-items-center">
    <svg width="12" height="10"><path d="M6 0l6 10H0z" fill="#b5b5b5" stroke="none"/></svg><div class="bar mt-1"></div>
    <svg width="12" height="10" class="mt-auto"><path d="M6 10l6-10H0z" fill="#b5b5b5" stroke="none"/></svg>
  </div>
</main>

<div class="sheets d-flex align-items-center flex-shrink-0">
  <div class="sh-nav d-flex align-items-center"><button aria-label="Previous sheet"><svg width="8" height="12" viewBox="0 0 8 12"><path d="M7 1L2 6l5 5"/></svg></button><button aria-label="Next sheet" class="sh-next"><svg width="8" height="12" viewBox="0 0 8 12"><path d="M1 1l5 5-5 5" stroke="#888"/></svg></button><button aria-label="More sheets" class="sh-more"><svg width="15" height="4"><g fill="#ccc" stroke="none"><circle cx="2" cy="2" r="2"/><circle cx="7.500" cy="2" r="2"/><circle cx="13" cy="2" r="2"/></g></svg></button></div>
  <a href="#" class="on"><span>PivotTables</span></a><a href="#">Dashboard</a><a href="#">Guest_Data</a><a href="#">Ref</a>
  <button aria-label="New sheet" class="ms-5 ps-1"><svg width="14" height="14" viewBox="0 0 14 14"><path d="M7 0v14M0 7h14"/></svg></button>
  <div class="hscroll ms-auto d-flex align-items-center"><svg class="grip" width="3" height="15"><path d="M1.500 0v15" stroke="#ddd" stroke-width="3" stroke-dasharray="3 3"/></svg><svg width="9" height="12"><path d="M9 0v12L0 6z" fill="#aaa" stroke="none"/></svg><div class="hbar"></div><svg width="9" height="12"><path d="M0 0v12l9-6z" fill="#aaa" stroke="none"/></svg></div>
</div>

<footer class="status d-flex align-items-center flex-shrink-0">
  <span>Ready</span>
  <button class="d-flex align-items-center gap-1 acc"><svg width="19" height="18" viewBox="0 0 19 18"><circle cx="8" cy="3" r="2.200"/><path d="M1 5.500l5 1.500v4l-3 6M15 5.500L10 7v3M9 10l8 7.500M17 9.500l-8 8" stroke="#ddd"/></svg>Accessibility: Investigate</button>
  <div class="stats d-flex ms-auto"><span>Average: 292</span><span>Count: 2</span><span>Sum: 292</span></div>
  <button class="view on" aria-label="Normal"><svg width="17" height="17" viewBox="0 0 17 17"><path d="M1 1h15v15H1zM6 1v15M11 1v15M1 6h15M1 11h15" stroke="#e8e8e8"/></svg></button>
  <button class="view" aria-label="Page layout"><svg width="17" height="17" viewBox="0 0 17 17"><path d="M1 1h15v15H1zM4 4h9v9H4zM6 6.500h5M6 8.500h5M6 10.500h5" stroke="#e8e8e8" stroke-width="1.300"/></svg></button>
  <button class="view" aria-label="Page break"><svg width="17" height="17" viewBox="0 0 17 17"><path d="M1 1h15v15H1zM6 1v9M11 1v9M1 10h10" stroke="#e8e8e8" stroke-width="1.600"/></svg></button>
  <button aria-label="Zoom out" class="ms-2"><svg width="10" height="2"><path d="M0 1h10" stroke="#ddd"/></svg></button>
  <input type="range" class="zoomr" min="0" max="100" value="32" aria-label="Zoom">
  <button aria-label="Zoom in" class="me-3"><svg width="10" height="10"><path d="M5 0v10M0 5h10" stroke="#ddd"/></svg></button>
  <span>66%</span>
</footer>
<div class="watermark"><div class="ar" lang="ar" dir="rtl">نفذلي</div><div class="en">nafezly.com</div></div>

<script>
const columns = [['E',39],['F',64],['G',83],['H',63],['I',53],['J',53],['K',104],['L',125],['M',60],['N',36],['O',30],['P',149],['Q',63],['R',72],['S',82],['T',83],['U',63],['V',53],['W',53],['X',83],['Y',101],['Z',123],['AA',65],['AB',70],['AC',76],['AD',120]];
const names = columns.map(c => c[0]);
const cells = {};
const put = (col, row, text, cls) => cells[col + row] = {text, cls};
const drop = '<button class="fil" aria-label="Filter"><svg width="5" height="3"><path d="M0 0h5L2.500 3z" stroke="none"/></svg></button>';
const sorted = '<button class="fil" aria-label="Sorted filter"><svg width="12" height="10" viewBox="0 0 12 10"><path d="M1 5h4L3 8z" stroke="none"/><path d="M8.500 0v9M6.500 7l2 2 2-2" fill="none"/></svg></button>';
const fold = '<span class="colp"><i></i></span>';
const simple = (a, b, data, total, btn) => {
  put(a, 3, btn + 'Row Labels', 'hd bd bb'); put(b, 3, 'Count of ID', 'hd bd bb');
  data.forEach(([n, v], i) => { const bb = i == data.length - 1 ? ' bb' : ''; put(a, 4 + i, n, bb); put(b, 4 + i, v, 'num' + bb); });
  const r = 4 + data.length; put(a, r, 'Grand Total', 'gt bd'); put(b, r, total, 'gt bd num');
};
simple('G', 'H', [['Detractors','499.0'],['Passives','523.0'],['Promoters','926.0']], '1948.0', drop);
simple('P', 'Q', [['Organization','778.0'],['hotel booking sites','306.0'],['Word of mouth','276.0'],['Search engine','240.0'],['Internet advertisement','157.0'],['Television advertisement','116.0'],['News paper','75.0']], '1948.0', sorted);
simple('T', 'U', [['Business','828.0'],['Vacation','693.0'],['Function','292.0'],['Other','135.0']], '1948.0', sorted);
cells.U6.cls += ' shade';
put('K', 3, drop + 'Row Labels', 'hd bd bb'); put('L', 3, 'Average of RatingScore', 'hd bd bb');
[['Broadband &amp; TV','Facility','3.0'],['Check-in Process','Staff','3.8'],['Food quality','Restaurant','3.0'],['Gym','Facility','3.2'],['Room cleanliness','Room','3.0'],['Room service','Room','3.6'],['Staff attitude','Staff','3.7'],['Variety of food','Restaurant','1.9']].forEach(([g, n, v], i) => {
  const r = 4 + i * 2, e = i == 7 ? ' bb' : '';
  put('K', r, fold + g, 'bd bb'); put('L', r, '', 'bb'); put('K', r + 1, n, 'in' + e); put('L', r + 1, v, 'num' + e);
});
put('K', 20, 'Grand Total', 'gt bd'); put('L', 20, '3.1', 'gt bd num');
const wide = ['X','Y','Z','AA','AB','AC','AD'];
['Count of ID', drop + 'Column Labels','','','','',''].forEach((t, i) => put(wide[i], 4, t, 'hd bd'));
[drop + 'Row Labels','hotel booking sites','Internet advertisement','News paper','Organization','Search engine','Television advertisement'].forEach((t, i) => put(wide[i], 5, t, 'hd bd bb'));
const months = 'Jan Feb Mar Apr May Jun Jul Aug Sep Oct Nov Dec'.split(' ');
const years = {
 2020: ['9,4,3,16,3','9,3,1,26,8','9,5,1,17,5','7,2,5,21,7','8,5,2,19,8','10,5,,20,7','11,5,3,22,6','13,5,3,13,6','12,4,1,17,8','9,7,3,25,12','6,4,1,22,6','6,3,,29,6'],
 2021: ['16,3,2,24,8','2,6,,16,6','9,6,4,30,5','8,5,4,28,6','11,4,2,23,8','15,5,5,18,7','2,4,2,22,13','13,3,2,22,6','6,6,3,27,5','5,7,7,28,6','7,2,,18,7','8,7,,33,7'],
 2022: ['9,,2,26,6','10,5,4,23,8','9,4,1,20,8','5,3,,13,5','12,4,1,15,7','5,2,1,19,6','8,2,,25,3','8,5,1,22,6','12,9,3,20,9','5,4,1,23,7','9,3,4,22,3','3,6,3,14,6']
};
let row = 6;
for (const y in years) {
  wide.forEach((c, i) => put(c, row, i ? '' : fold + y, 'bd bb')); row++;
  years[y].forEach((line, m) => {
    put('X', row, months[m], 'in'); put('AD', row, '', '');
    line.split(',').forEach((v, i) => put(wide[i + 1], row, v && v + '.0', 'num')); row++;
  });
}
document.getElementById('cols').innerHTML = '<col style="width:23px">' + columns.map(c => `<col style="width:${c[1]}px">`).join('');
document.getElementById('head').innerHTML = '<th><svg width="8" height="8" class="ms-auto me-1"><path d="M8 0v8H0z" fill="#777" stroke="none"/></svg></th>' + names.map(n => `<th${n == 'T' || n == 'U' ? ' class="cur"' : ''}>${n}</th>`).join('');
let body = '';
for (let r = 1; r <= 44; r++) {
  body += `<tr><th${r == 6 ? ' class="cur"' : ''}>${r}</th>` + names.map(n => { const c = cells[n + r]; return c ? `<td class="pv ${c.cls}">${c.text}</td>` : '<td></td>'; }).join('') + '</tr>';
}
document.getElementById('rows').innerHTML = body;

/* charts, drawn in window pixels */
const defs = '<defs><linearGradient id="bl" x1="0" y1="0" x2="0" y2="1"><stop offset="0" stop-color="#6fa5db"/><stop offset=".5" stop-color="#529bdb"/><stop offset="1" stop-color="#428bc9"/></linearGradient><linearGradient id="yl" x1="0" y1="0" x2="0" y2="1"><stop offset="0" stop-color="#ffc746"/><stop offset=".5" stop-color="#ffc600"/><stop offset="1" stop-color="#e5b600"/></linearGradient><linearGradient id="gb" x1="0" y1="0" x2="0" y2="1"><stop offset="0" stop-color="#d2d2d2"/><stop offset="1" stop-color="#b9b9b9"/></linearGradient><filter id="sh" x="-20%" y="-20%" width="140%" height="140%"><feDropShadow dx="0" dy="1" stdDeviation="1.500" flood-opacity=".6"/></filter></defs>';
const t = (x, y, s, a = 'middle') => `<text x="${x}" y="${y + 3}" text-anchor="${a}">${s}</text>`;
const bars = list => list.map(([x, y, w, b]) => `<rect x="${x}" y="${y}" width="${w}" height="${b - y}" fill="url(#bl)" filter="url(#sh)"/>`).join('');
const axis = (x1, x2, y) => `<path d="M${x1} ${y}.5H${x2}" stroke="#d9d9d9" stroke-width="1"/>`;
const scale = (x, top, bottom, max, step) => { let s = ''; const n = max / step; for (let i = 0; i <= n; i++) s += t(x, Math.round(bottom - (bottom - top) * i / n), (i * step).toFixed(1), 'end'); return s; };
const draw = (sel, x, y, w, h, inner) => document.querySelector(sel).innerHTML = `<svg width="${w}" height="${h}" viewBox="${x} ${y} ${w} ${h}">${defs}${inner}</svg>`;
draw('.c-part', 23, 447, 43, 155, bars([[12, 501, 20, 553]]) + axis(12, 54, 553));
draw('.c-nps', 89, 442, 249, 196, scale(125, 476, 589, 1000, 200) + bars([[149,533,32,589],[213,530,32,589],[277,485,32,589]]) + axis(134, 325, 589) + t(165, 602, 'Detractors') + t(229, 602, 'Passives') + t(293, 602, 'Promoters')
  + '<rect x="98" y="449" width="58" height="14" fill="url(#gb)"/><rect x="98" y="615" width="80" height="14" fill="url(#gb)"/><path d="M166 619h8l-4 5z" fill="#444"/>' + t(102, 456, 'Count of ID', 'start') + t(102, 622, 'NPS_Category', 'start'));
draw('.c-source', 702, 503, 283, 225, scale(732, 515, 633, 900, 100) + bars([[749,531,18,633],[782,593,18,633],[815,597,17,633],[848,602,17,633],[881,613,17,633],[915,618,17,633],[948,623,17,633]]) + axis(740, 971, 633)
  + ['Organization','hotel booking sites','Word of mouth','Search engine','Internet advertisement','Television advertisement','News paper'].map((s, i) => `<text transform="translate(${761 + 33 * i} 645) rotate(-45)" text-anchor="end">${s}</text>`).join(''));
draw('.c-purpose', 1034, 454, 291, 222, scale(1064, 466, 649, 900, 100) + bars([[1088,481,30,649],[1147,508,31,649],[1207,590,31,649],[1267,622,30,649]]) + axis(1072, 1312, 649) + t(1103, 662, 'Business') + t(1163, 662, 'Vacation') + t(1222, 662, 'Function') + t(1282, 662, 'Other'));
draw('.c-rating', 283, 664, 395, 244, '<path d="M480 720L540 726L546 787L531 836L480 851L424 842L398 786L450 757z" fill="url(#yl)" filter="url(#sh)"/>'
  + [[480,675,'Broadband &amp; TV'],[480,687,'Facility'],[480,702,'3.0'],[551,714,'3.8'],[589,720,'Check-in Process Staff'],[564,786,'3.0'],[596,779,'Food quality'],[596,791,'Restaurant'],[542,848,'3.2'],[569,850,'Gym Facility'],[480,869,'3.0'],[480,883,'Room cleanliness'],[480,895,'Room'],[375,850,'Room service Room'],[411,854,'3.6'],[351,785,'Staff attitude Staff'],[381,786,'3.7'],[385,714,'Variety of food'],[385,726,'Restaurant'],[438,744,'1.9']].map(a => t(...a)).join(''));
</script>
<script src="https://cdn.jsdelivr.net/npm/bootstrap@5.3.0/dist/js/bootstrap.bundle.min.js"></script>
</body>
</html>
